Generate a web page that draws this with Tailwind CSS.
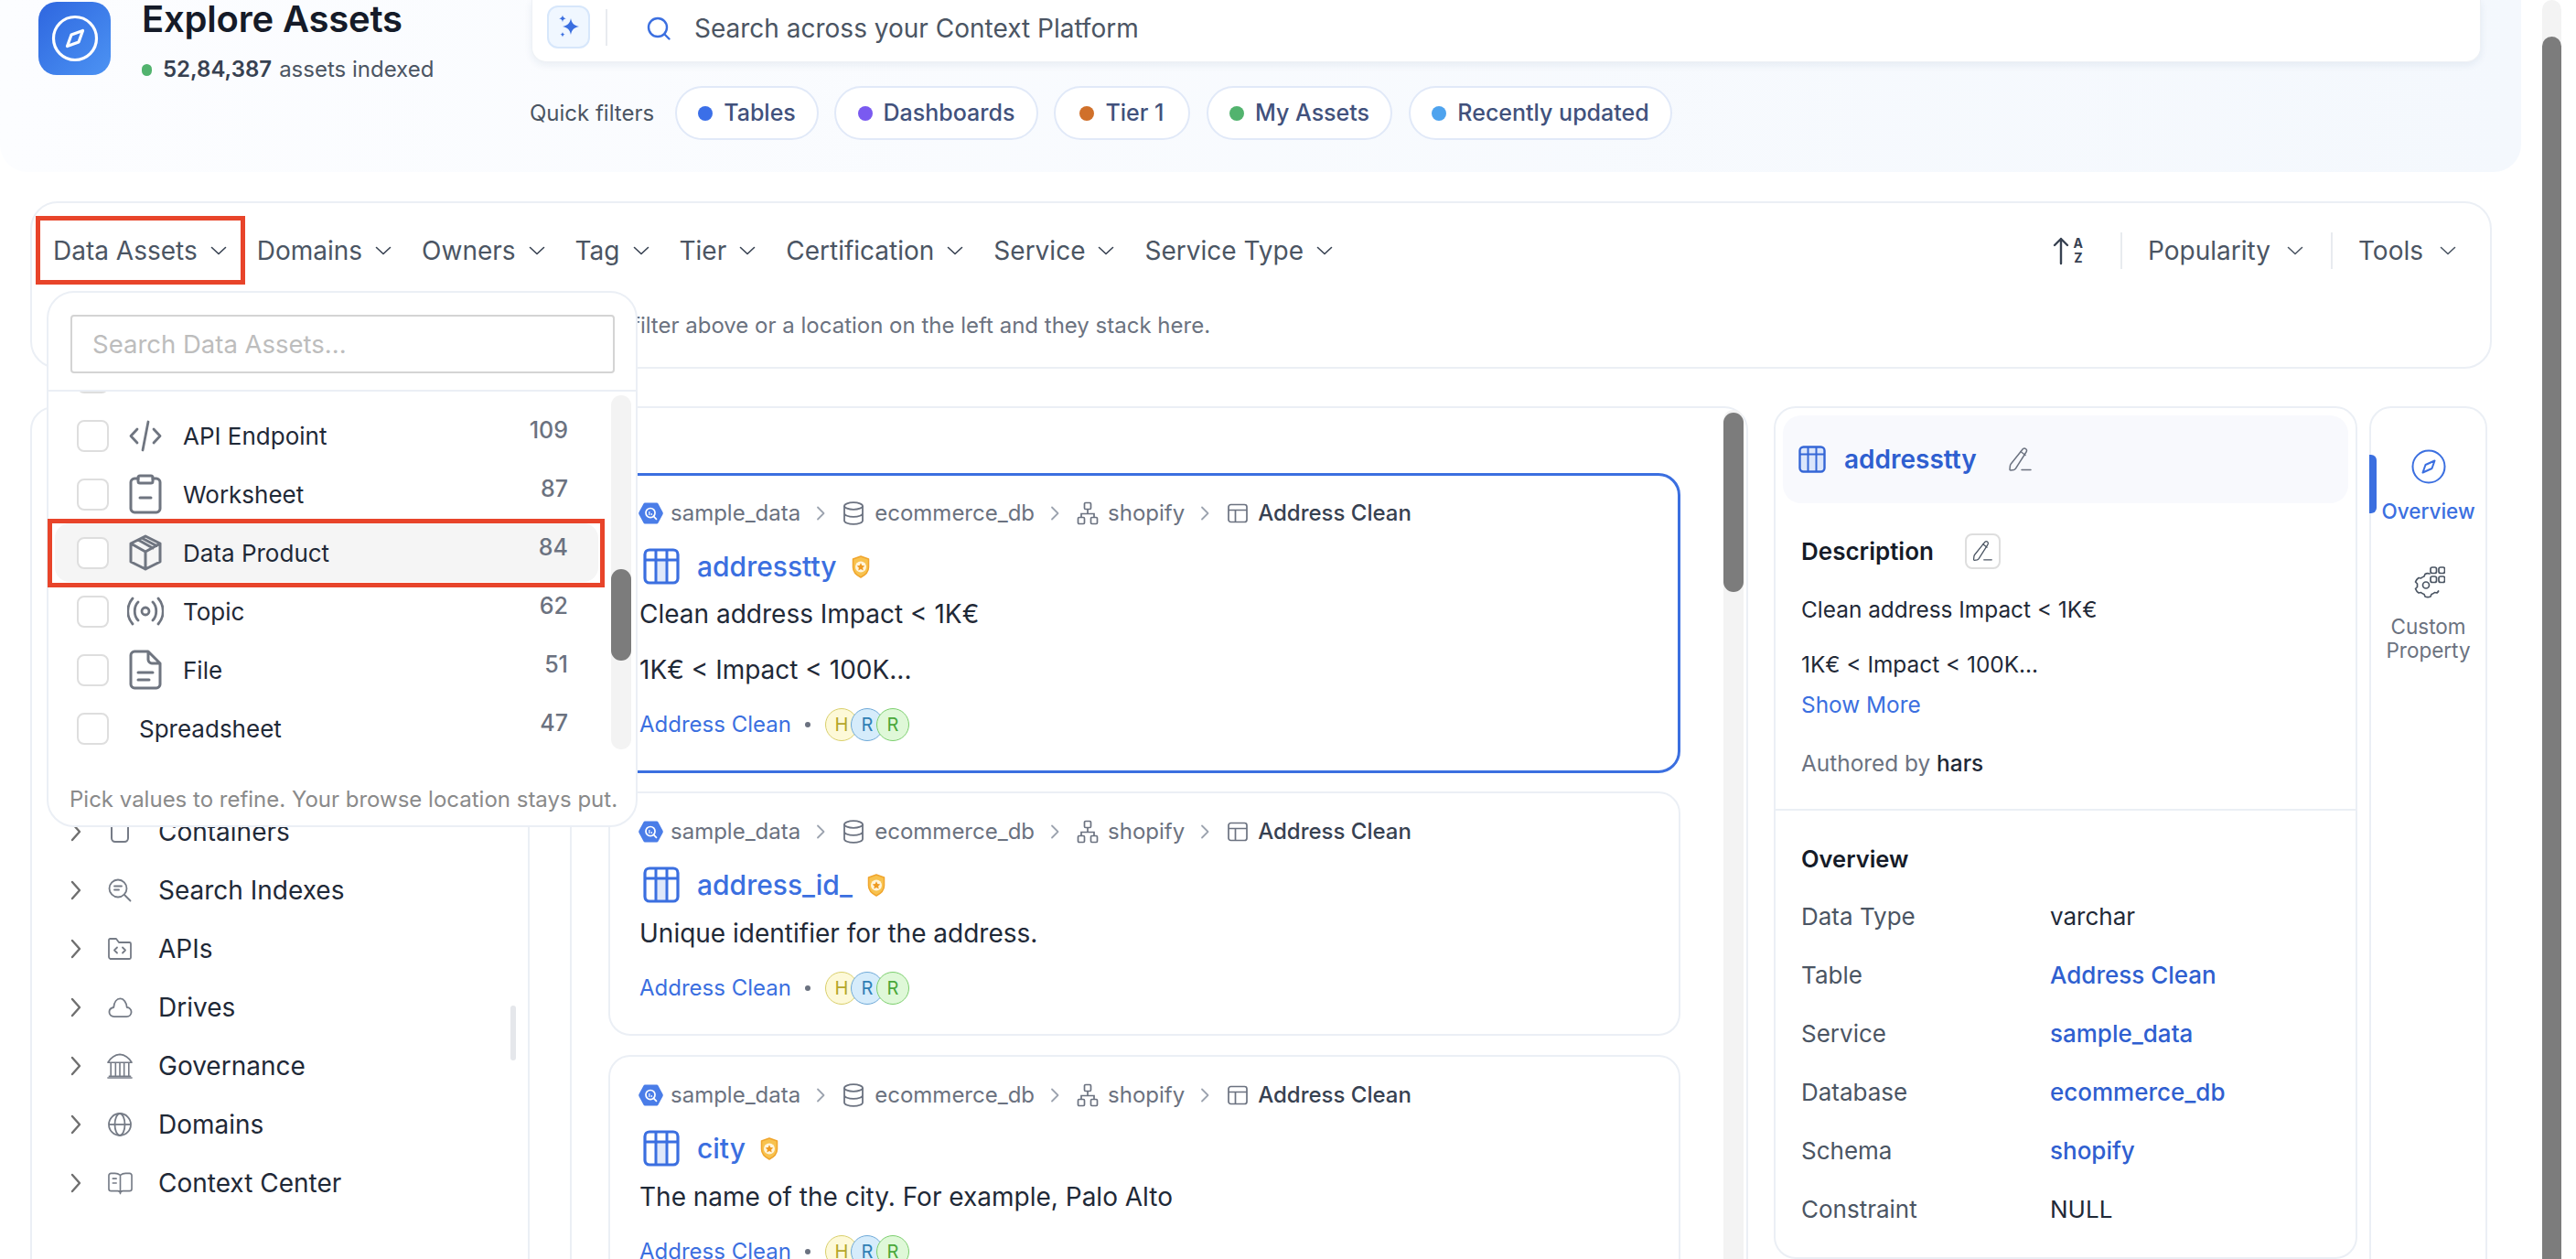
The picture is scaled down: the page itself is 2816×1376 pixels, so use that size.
<!DOCTYPE html>
<html lang="en">
<head>
<meta charset="utf-8">
<title>Explore Assets</title>
<script src="https://cdn.jsdelivr.net/npm/@tailwindcss/browser@4"></script>
</head>
<body class="bg-white overflow-hidden">
<svg class="hidden" xmlns="http://www.w3.org/2000/svg">
  <symbol id="chev" viewBox="0 0 18 10"><path d="M1.500 1.500 9 8.500l7.500-7" fill="none" stroke="currentColor" stroke-width="1.600" stroke-linecap="round" stroke-linejoin="round"/></symbol>
  <symbol id="chev-r" viewBox="0 0 12 22"><path d="M2 2l8 9-8 9" fill="none" stroke="currentColor" stroke-width="2.400" stroke-linecap="round" stroke-linejoin="round"/></symbol>
  <symbol id="crumb-chev" viewBox="0 0 10 16"><path d="M2 1.500 8.500 8 2 14.500" fill="none" stroke="currentColor" stroke-width="1.800" stroke-linecap="round" stroke-linejoin="round"/></symbol>
  <symbol id="table" viewBox="0 0 40 40"><rect x="14" y="12" width="12" height="26" fill="#dfe8fa"/><rect x="2" y="2" width="36" height="36" rx="5" fill="none" stroke="currentColor" stroke-width="3.200"/><path d="M2 13h36M14 2v36M26 2v36" fill="none" stroke="currentColor" stroke-width="3"/></symbol>
  <symbol id="table-thin" viewBox="0 0 24 24"><rect x="2" y="2.500" width="20" height="19" rx="2.500" fill="none" stroke="currentColor" stroke-width="1.700"/><path d="M2 8.500h20M9.500 8.500v13" fill="none" stroke="currentColor" stroke-width="1.700"/></symbol>
  <symbol id="db" viewBox="0 0 24 26"><ellipse cx="12" cy="5" rx="10" ry="3.800" fill="none" stroke="currentColor" stroke-width="1.800"/><path d="M2 5v16c0 2.200 4.500 3.900 10 3.900s10-1.700 10-3.900V5M2 13c0 2.200 4.500 3.900 10 3.900s10-1.700 10-3.900" fill="none" stroke="currentColor" stroke-width="1.800"/></symbol>
  <symbol id="hier" viewBox="0 0 24 26"><g fill="none" stroke="currentColor" stroke-width="1.700"><rect x="8.500" y="1.500" width="7" height="7" rx="1.200"/><rect x="1.500" y="17.500" width="7" height="7" rx="1.200"/><rect x="15.500" y="17.500" width="7" height="7" rx="1.200"/><path d="M12 8.500v5M5 17.500v-4h14v4"/></g></symbol>
  <symbol id="hex" viewBox="0 0 28 26"><path d="M7.300 1h13.400c.7 0 1.300.4 1.600 1l5.300 10c.3.600.3 1.400 0 2l-5.300 10c-.3.600-.9 1-1.600 1H7.300c-.7 0-1.300-.4-1.600-1L.4 14c-.3-.6-.3-1.400 0-2L5.700 2c.3-.6.900-1 1.600-1z" fill="#4a7de8"/><circle cx="13.500" cy="12.500" r="5.200" fill="none" stroke="#fff" stroke-width="1.800"/><path d="M17.200 16.500l3 3" stroke="#fff" stroke-width="1.800" stroke-linecap="round"/><path d="M12.300 11v4M14.800 13v2" stroke="#fff" stroke-width="1.200"/></symbol>
  <symbol id="badge" viewBox="0 0 20 25"><path d="M10 1 18.500 4v9c0 5-3.500 8.500-8.500 11C5 21.500 1.500 18 1.500 13V4z" fill="#f8c24e" stroke="#f0a52d" stroke-width="1.500" stroke-linejoin="round"/><circle cx="10" cy="12.500" r="6" fill="#fff5dc"/><path d="M10 8.300l1.300 2.800 3 .3-2.200 2 .6 3-2.700-1.500-2.700 1.500.6-3-2.200-2 3-.3z" fill="#ee9a22"/></symbol>
  <symbol id="pen" viewBox="0 0 28 28"><path d="M17.500 2.500c1-.8 2.300-.6 3.200.2 1 .9 1 2.200.3 3.300L9.500 24c-.5.700-1.200 1.200-2 1.400l-3.500.6c-.6.100-1-.3-1-.9l.4-4c.1-.8.400-1.500.9-2.100z" fill="none" stroke="currentColor" stroke-width="1.500" stroke-linejoin="round"/><path d="M15 5.500l5 4M16 25.500h10" fill="none" stroke="currentColor" stroke-width="1.500" stroke-linecap="round"/></symbol>
</svg>

<div class="relative flex w-[2816px] h-[1376px] overflow-hidden bg-white font-['Inter',sans-serif]">
  <main class="w-[2779px] shrink-0 flex flex-col">

    <section class="w-[2756px] h-[188px] shrink-0 flex pl-[42px] rounded-b-[30px] bg-gradient-to-r from-[#fcfdff] to-[#f4f8fd]">
      <div class="mt-[2px] w-[79px] h-[80px] shrink-0 flex items-center justify-center rounded-[20px] bg-gradient-to-br from-[#2f66df] to-[#4d93f3]">
        <svg viewBox="0 0 52 52" class="w-[52px] h-[52px]" fill="none" stroke="#fff" stroke-width="3.200"><circle cx="26" cy="26" r="23.500"/><path d="M34.500 17.500 30 30l-12.500 4.500L22 22z" stroke-linejoin="round"/></svg>
      </div>
      <div class="ml-[34px] w-[426px] shrink-0 flex flex-col">
        <h1 class="mt-[1px] h-[40px] text-[40px] leading-[40px] font-semibold text-[#151b28] tracking-[-0.2px]">Explore Assets</h1>
        <div class="mt-[19px] flex items-center text-[24px] leading-[32px] text-[#4b5563]">
          <span class="w-[11px] h-[13px] rounded-full bg-[#52b36e]"></span>
          <span class="ml-[12px] font-semibold text-[#374151]">52,84,387</span>
          <span class="ml-[8px]">assets indexed</span>
        </div>
      </div>
      <div class="w-[2131px] shrink-0 flex flex-col">
        <div class="h-[68px] flex items-center pl-[16px] bg-white rounded-b-[16px] border-r border-b border-l border-[#eef1f5] shadow-[0_3px_8px_rgba(30,60,110,0.08)]">
          <div class="w-[47px] h-[47px] -mt-[9px] flex items-center justify-center rounded-[12px] bg-[#f0f7ff] border-2 border-[#d7e7fb]">
            <svg viewBox="0 0 28 28" class="w-[28px] h-[28px]" fill="#3b6fe0"><path d="M16 5c.9 5.300 3.200 7.700 9 9-5.800 1.300-8.100 3.700-9 9-.9-5.300-3.200-7.700-9-9 5.800-1.300 8.100-3.700 9-9z"/><path d="M7 1.500c.4 2.400 1.300 3.300 3.800 3.800C8.300 5.800 7.400 6.700 7 9.200 6.600 6.700 5.700 5.800 3.200 5.300 5.700 4.800 6.600 3.900 7 1.500zM7 20c.3 1.700 1 2.400 2.700 2.700C8 23 7.300 23.700 7 25.500c-.3-1.800-1-2.500-2.700-2.800C6 22.400 6.700 21.700 7 20z"/></svg>
          </div>
          <span class="ml-[17px] -mt-[8px] w-[2px] h-[40px] bg-[#e8ebef]"></span>
          <svg viewBox="0 0 26 26" class="ml-[43px] -mt-[5px] w-[26px] h-[26px]" fill="none" stroke="#3b6fe0" stroke-width="2.400" stroke-linecap="round"><circle cx="12" cy="12" r="10"/><path d="M19.500 19.500 24.500 24.500"/></svg>
          <span class="ml-[26px] -mt-[5px] text-[28px] leading-[36px] text-[#4b5563]">Search across your Context Platform</span>
        </div>
        <div class="mt-[26px] flex items-center">
          <span class="-ml-[2px] w-[159px] text-[24px] text-[#4b5563]">Quick filters</span>
          <div class="w-[157px] h-[59px] flex items-center justify-center gap-[12px] bg-white rounded-full border-2 border-[#e1e9f8] text-[25px] font-medium text-[#41517c]"><span class="w-[16px] h-[16px] rounded-full bg-[#3b6fe8]"></span>Tables</div>
          <div class="ml-[17px] w-[223px] h-[59px] flex items-center justify-center gap-[12px] bg-white rounded-full border-2 border-[#e1e9f8] text-[25px] font-medium text-[#41517c]"><span class="w-[16px] h-[16px] rounded-full bg-[#7a5af0]"></span>Dashboards</div>
          <div class="ml-[17px] w-[149px] h-[59px] flex items-center justify-center gap-[12px] bg-white rounded-full border-2 border-[#e1e9f8] text-[25px] font-medium text-[#41517c]"><span class="w-[16px] h-[16px] rounded-full bg-[#d0702a]"></span>Tier 1</div>
          <div class="ml-[18px] w-[203px] h-[59px] flex items-center justify-center gap-[12px] bg-white rounded-full border-2 border-[#e1e9f8] text-[25px] font-medium text-[#41517c]"><span class="w-[16px] h-[16px] rounded-full bg-[#52b36e]"></span>My Assets</div>
          <div class="ml-[18px] w-[288px] h-[59px] flex items-center justify-center gap-[12px] bg-white rounded-full border-2 border-[#e1e9f8] text-[25px] font-medium text-[#41517c]"><span class="w-[16px] h-[16px] rounded-full bg-[#4ea3ee]"></span>Recently updated</div>
        </div>
      </div>
    </section>

    <section class="ml-[33px] mt-[32px] w-[2691px] h-[183px] shrink-0 flex flex-col rounded-[30px] border-2 border-[#ebeff5] bg-white">
      <div class="mt-[26px] h-[52px] flex items-center pl-[23px] pr-[37px] text-[28px] text-[#4b5563]">
        <div class="flex items-center gap-[33px]">
          <span class="flex items-center gap-[14px]">Data Assets<svg class="w-[18px] h-[10px] text-[#374151]"><use href="#chev"/></svg></span>
          <span class="flex items-center gap-[14px]">Domains<svg class="w-[18px] h-[10px] text-[#374151]"><use href="#chev"/></svg></span>
          <span class="flex items-center gap-[14px]">Owners<svg class="w-[18px] h-[10px] text-[#374151]"><use href="#chev"/></svg></span>
          <span class="flex items-center gap-[14px]">Tag<svg class="w-[18px] h-[10px] text-[#374151]"><use href="#chev"/></svg></span>
          <span class="flex items-center gap-[14px]">Tier<svg class="w-[18px] h-[10px] text-[#374151]"><use href="#chev"/></svg></span>
          <span class="flex items-center gap-[14px]">Certification<svg class="w-[18px] h-[10px] text-[#374151]"><use href="#chev"/></svg></span>
          <span class="flex items-center gap-[14px]">Service<svg class="w-[18px] h-[10px] text-[#374151]"><use href="#chev"/></svg></span>
          <span class="flex items-center gap-[14px]">Service Type<svg class="w-[18px] h-[10px] text-[#374151]"><use href="#chev"/></svg></span>
        </div>
        <div class="ml-auto flex items-center">
          <span class="flex items-center gap-[5px] text-[#374151]">
            <svg viewBox="0 0 18 32" class="w-[18px] h-[32px]" fill="none" stroke="currentColor" stroke-width="2.400" stroke-linecap="round" stroke-linejoin="round"><path d="M9 30V3M2 10l7-7 7 7"/></svg>
            <span class="flex flex-col items-center text-[14px] leading-[16px] font-bold"><span>A</span><span>Z</span></span>
          </span>
          <span class="ml-[41px] w-[2px] h-[40px] bg-[#e8ebef]"></span>
          <span class="ml-[28px] flex items-center gap-[18px]">Popularity<svg class="w-[18px] h-[10px] text-[#4b5563]"><use href="#chev"/></svg></span>
          <span class="ml-[30px] w-[2px] h-[40px] bg-[#e8ebef]"></span>
          <span class="ml-[28px] flex items-center gap-[18px]">Tools<svg class="w-[18px] h-[10px] text-[#4b5563]"><use href="#chev"/></svg></span>
        </div>
      </div>
      <p class="mt-[40px] pl-[656px] text-[24px] leading-[32px] text-[#6b7280]">filter above or a location on the left and they stack here.</p>
    </section>

    <div class="ml-[33px] mt-[41px] flex items-start">
      <aside class="relative w-[546px] h-[960px] shrink-0 pt-[431px] pl-[42px] rounded-t-[26px] border-2 border-[#ebeff5] bg-white text-[28px] text-[#1f2937]">
        <div class="h-[64px] flex items-center"><svg class="w-[12px] h-[22px] text-[#6f6f6f]"><use href="#chev-r"/></svg><span class="w-[84px] flex justify-center"><svg viewBox="0 0 26 26" class="w-[26px] h-[26px]" fill="none" stroke="#757b86" stroke-width="2"><path d="M4 2v18c0 2 1.500 4 4 4h10c2.500 0 4-2 4-4V2"/></svg></span>Containers</div>
        <div class="h-[64px] flex items-center"><svg class="w-[12px] h-[22px] text-[#6f6f6f]"><use href="#chev-r"/></svg><span class="w-[84px] flex justify-center"><svg viewBox="0 0 26 26" class="w-[26px] h-[26px]" fill="none" stroke="#757b86" stroke-width="1.800" stroke-linecap="round"><circle cx="11" cy="11" r="9.500"/><path d="M18 18l6.500 6.500M7 8.500h8M7 12.500h5"/></svg></span>Search Indexes</div>
        <div class="h-[64px] flex items-center"><svg class="w-[12px] h-[22px] text-[#6f6f6f]"><use href="#chev-r"/></svg><span class="w-[84px] flex justify-center"><svg viewBox="0 0 26 26" class="w-[26px] h-[26px]" fill="none" stroke="#757b86" stroke-width="1.800" stroke-linecap="round" stroke-linejoin="round"><path d="M1 3.500c0-.8.600-1.500 1.500-1.500H9l3 4h11.500c.8 0 1.500.700 1.500 1.500v15c0 .8-.7 1.500-1.500 1.500h-21C1.600 23.500 1 22.800 1 22z"/><path d="M10 11.500l-3 3 3 3M16 11.500l3 3-3 3"/></svg></span>APIs</div>
        <div class="h-[64px] flex items-center"><svg class="w-[12px] h-[22px] text-[#6f6f6f]"><use href="#chev-r"/></svg><span class="w-[84px] flex justify-center"><svg viewBox="0 0 28 24" class="w-[27px] h-[24px]" fill="none" stroke="#757b86" stroke-width="1.900" stroke-linejoin="round"><path d="M7 22.500h14c3.300 0 5.500-2.300 5.500-5.300 0-2.900-2.200-5-5-5.200C21 6.500 18 2 14 2S7 6 6.500 12C3.500 12.500 1.500 14.500 1.500 17.300c0 3 2.200 5.200 5.500 5.200z"/></svg></span>Drives</div>
        <div class="h-[64px] flex items-center"><svg class="w-[12px] h-[22px] text-[#6f6f6f]"><use href="#chev-r"/></svg><span class="w-[84px] flex justify-center"><svg viewBox="0 0 32 30" class="w-[32px] h-[28px]" fill="none" stroke="#757b86" stroke-width="1.700" stroke-linecap="round" stroke-linejoin="round"><path d="M2 11c3-5 8-9 14-9.500C22 2 27 6 30 11zM2 11h28M5.500 11v15M11 11v15M16 11v15M21 11v15M26.500 11v15M3.500 27h25M2 29h28"/></svg></span>Governance</div>
        <div class="h-[64px] flex items-center"><svg class="w-[12px] h-[22px] text-[#6f6f6f]"><use href="#chev-r"/></svg><span class="w-[84px] flex justify-center"><svg viewBox="0 0 26 26" class="w-[26px] h-[26px]" fill="none" stroke="#757b86" stroke-width="1.800"><circle cx="13" cy="13" r="12"/><ellipse cx="13" cy="13" rx="5.500" ry="12"/><path d="M1 13h24"/></svg></span>Domains</div>
        <div class="h-[64px] flex items-center"><svg class="w-[12px] h-[22px] text-[#6f6f6f]"><use href="#chev-r"/></svg><span class="w-[84px] flex justify-center"><svg viewBox="0 0 28 26" class="w-[27px] h-[26px]" fill="none" stroke="#757b86" stroke-width="1.700" stroke-linecap="round" stroke-linejoin="round"><path d="M14 4c-2-1.500-4-2-6-2H3.500C2.100 2 1 3 1 4.500v15C1 21 2.100 22 3.500 22H11c1.600 0 3 1 3 2.500 0-1.500 1.400-2.500 3-2.500h7.500c1.400 0 2.500-1 2.500-2.500v-15C27 3 25.900 2 24.500 2H20c-2 0-4 .5-6 2zM14 4v21M5.500 8h4M5.500 13h4"/></svg></span>Context Center</div>
        <div class="absolute left-[523px] top-[653px] w-[6px] h-[60px] rounded-full bg-[#e5e7eb]"></div>
      </aside>

      <section class="ml-[44px] w-[1288px] h-[960px] shrink-0 flex rounded-t-[26px] border-2 border-[#ebeff5] bg-white">
        <div class="w-[1172px] ml-[40px] mt-[71px] shrink-0 flex flex-col gap-[20px]">

          <article class="h-[328px] shrink-0 pl-[31px] pt-[24px] rounded-[24px] border-[3px] border-[#3b6fe0]">
            <div class="h-[34px] flex items-center text-[24px] text-[#6b7280]">
              <svg class="-ml-[1px] w-[27px] h-[26px]"><use href="#hex"/></svg><span class="ml-[8px]">sample_data</span>
              <svg class="ml-[17px] w-[10px] h-[16px] text-[#9ca3af]"><use href="#crumb-chev"/></svg>
              <svg class="ml-[19px] w-[24px] h-[26px]"><use href="#db"/></svg><span class="ml-[11px]">ecommerce_db</span>
              <svg class="ml-[17px] w-[10px] h-[16px] text-[#9ca3af]"><use href="#crumb-chev"/></svg>
              <svg class="ml-[19px] w-[24px] h-[26px]"><use href="#hier"/></svg><span class="ml-[10px]">shopify</span>
              <svg class="ml-[17px] w-[10px] h-[16px] text-[#9ca3af]"><use href="#crumb-chev"/></svg>
              <svg class="ml-[19px] w-[24px] h-[24px]"><use href="#table-thin"/></svg><span class="ml-[10px] font-medium text-[#374151]">Address Clean</span>
            </div>
            <div class="mt-[19px] h-[44px] flex items-center text-[30px] font-medium text-[#3b6fe0]"><svg class="ml-[4px] w-[40px] h-[40px]"><use href="#table"/></svg><span class="ml-[19px]">addresstty</span><svg class="ml-[16px] w-[20px] h-[25px]"><use href="#badge"/></svg></div>
            <p class="mt-[11px] text-[28px] leading-[38px] text-[#1f2937]">Clean address Impact &lt; 1K€</p>
            <p class="mt-[23px] text-[28px] leading-[38px] text-[#1f2937]">1K€ &lt; Impact &lt; 100K...</p>
            <div class="mt-[23px] h-[36px] flex items-center text-[24px] text-[#3b6fe0]">Address Clean<span class="ml-[15px] w-[6px] h-[6px] rounded-full bg-[#6b7280]"></span><div class="ml-[16px] flex text-[20px]"><span class="w-[36px] h-[36px] rounded-full flex items-center justify-center border border-[#d9cf6a] bg-[#fdf9d8] text-[#b5a62a]">H</span><span class="-ml-[8px] w-[36px] h-[36px] rounded-full flex items-center justify-center border border-[#6ea9d8] bg-[#d6ecfb] text-[#2f7fb5]">R</span><span class="-ml-[8px] w-[36px] h-[36px] rounded-full flex items-center justify-center border border-[#7ccf6e] bg-[#dff8d8] text-[#4aa83a]">R</span></div></div>
          </article>

          <article class="h-[267px] shrink-0 pl-[32px] pt-[25px] rounded-[24px] border-2 border-[#ebeff5]">
            <div class="h-[34px] flex items-center text-[24px] text-[#6b7280]">
              <svg class="-ml-[1px] w-[27px] h-[26px]"><use href="#hex"/></svg><span class="ml-[8px]">sample_data</span>
              <svg class="ml-[17px] w-[10px] h-[16px] text-[#9ca3af]"><use href="#crumb-chev"/></svg>
              <svg class="ml-[19px] w-[24px] h-[26px]"><use href="#db"/></svg><span class="ml-[11px]">ecommerce_db</span>
              <svg class="ml-[17px] w-[10px] h-[16px] text-[#9ca3af]"><use href="#crumb-chev"/></svg>
              <svg class="ml-[19px] w-[24px] h-[26px]"><use href="#hier"/></svg><span class="ml-[10px]">shopify</span>
              <svg class="ml-[17px] w-[10px] h-[16px] text-[#9ca3af]"><use href="#crumb-chev"/></svg>
              <svg class="ml-[19px] w-[24px] h-[24px]"><use href="#table-thin"/></svg><span class="ml-[10px] font-medium text-[#374151]">Address Clean</span>
            </div>
            <div class="mt-[19px] h-[44px] flex items-center text-[30px] font-medium text-[#3b6fe0]"><svg class="ml-[4px] w-[40px] h-[40px]"><use href="#table"/></svg><span class="ml-[19px]">address_id_</span><svg class="ml-[16px] w-[20px] h-[25px]"><use href="#badge"/></svg></div>
            <p class="mt-[12px] text-[28px] leading-[38px] text-[#1f2937]">Unique identifier for the address.</p>
            <div class="mt-[23px] h-[36px] flex items-center text-[24px] text-[#3b6fe0]">Address Clean<span class="ml-[15px] w-[6px] h-[6px] rounded-full bg-[#6b7280]"></span><div class="ml-[16px] flex text-[20px]"><span class="w-[36px] h-[36px] rounded-full flex items-center justify-center border border-[#d9cf6a] bg-[#fdf9d8] text-[#b5a62a]">H</span><span class="-ml-[8px] w-[36px] h-[36px] rounded-full flex items-center justify-center border border-[#6ea9d8] bg-[#d6ecfb] text-[#2f7fb5]">R</span><span class="-ml-[8px] w-[36px] h-[36px] rounded-full flex items-center justify-center border border-[#7ccf6e] bg-[#dff8d8] text-[#4aa83a]">R</span></div></div>
          </article>

          <article class="mt-[1px] h-[267px] shrink-0 pl-[32px] pt-[25px] rounded-[24px] border-2 border-[#ebeff5]">
            <div class="h-[34px] flex items-center text-[24px] text-[#6b7280]">
              <svg class="-ml-[1px] w-[27px] h-[26px]"><use href="#hex"/></svg><span class="ml-[8px]">sample_data</span>
              <svg class="ml-[17px] w-[10px] h-[16px] text-[#9ca3af]"><use href="#crumb-chev"/></svg>
              <svg class="ml-[19px] w-[24px] h-[26px]"><use href="#db"/></svg><span class="ml-[11px]">ecommerce_db</span>
              <svg class="ml-[17px] w-[10px] h-[16px] text-[#9ca3af]"><use href="#crumb-chev"/></svg>
              <svg class="ml-[19px] w-[24px] h-[26px]"><use href="#hier"/></svg><span class="ml-[10px]">shopify</span>
              <svg class="ml-[17px] w-[10px] h-[16px] text-[#9ca3af]"><use href="#crumb-chev"/></svg>
              <svg class="ml-[19px] w-[24px] h-[24px]"><use href="#table-thin"/></svg><span class="ml-[10px] font-medium text-[#374151]">Address Clean</span>
            </div>
            <div class="mt-[19px] h-[44px] flex items-center text-[30px] font-medium text-[#3b6fe0]"><svg class="ml-[4px] w-[40px] h-[40px]"><use href="#table"/></svg><span class="ml-[19px]">city</span><svg class="ml-[16px] w-[20px] h-[25px]"><use href="#badge"/></svg></div>
            <p class="mt-[12px] text-[28px] leading-[38px] text-[#1f2937]">The name of the city. For example, Palo Alto</p>
            <div class="mt-[23px] h-[36px] flex items-center text-[24px] text-[#3b6fe0]">Address Clean<span class="ml-[15px] w-[6px] h-[6px] rounded-full bg-[#6b7280]"></span><div class="ml-[16px] flex text-[20px]"><span class="w-[36px] h-[36px] rounded-full flex items-center justify-center border border-[#d9cf6a] bg-[#fdf9d8] text-[#b5a62a]">H</span><span class="-ml-[8px] w-[36px] h-[36px] rounded-full flex items-center justify-center border border-[#6ea9d8] bg-[#d6ecfb] text-[#2f7fb5]">R</span><span class="-ml-[8px] w-[36px] h-[36px] rounded-full flex items-center justify-center border border-[#7ccf6e] bg-[#dff8d8] text-[#4aa83a]">R</span></div></div>
          </article>
        </div>
        <div class="ml-[47px] mt-[2px] w-[22px] h-[950px] shrink-0 rounded-full bg-[#f3f3f3]"><div class="mt-[3px] h-[196px] rounded-full bg-[#7c7c7c]"></div></div>
      </section>

      <section class="ml-[28px] w-[638px] h-[932px] shrink-0 flex flex-col rounded-[24px] border-2 border-[#ebeff5] bg-white">
        <div class="mx-[8px] mt-[8px] h-[96px] shrink-0 flex items-center pl-[17px] rounded-[20px] bg-[#f8f9fd]">
          <svg viewBox="0 0 30 30" class="w-[30px] h-[30px]"><rect x="1.500" y="1.500" width="27" height="27" rx="4" fill="#dbe6fb" stroke="#3566d6" stroke-width="2.400"/><path d="M1.500 9.500h27M10.500 1.500v27M19.500 1.500v27" stroke="#3566d6" stroke-width="2" fill="none"/></svg>
          <span class="ml-[20px] text-[28px] font-semibold text-[#2f5fd0]">addresstty</span>
          <svg class="ml-[33px] w-[28px] h-[28px] text-[#6b7280]"><use href="#pen"/></svg>
        </div>
        <div class="h-[336px] shrink-0 pl-[28px] pt-[32px] border-b-2 border-[#ebeff5] text-[24.4px] text-[#1f2937]">
          <div class="h-[40px] flex items-center"><span class="text-[26px] font-semibold text-[#151b28]">Description</span><span class="ml-[34px] w-[39px] h-[39px] flex items-center justify-center rounded-[8px] border-2 border-[#dedede]"><svg class="w-[24px] h-[24px] text-[#4b5563]"><use href="#pen"/></svg></span></div>
          <p class="mt-[28px] leading-[32px]">Clean address Impact &lt; 1K€</p>
          <p class="mt-[28px] leading-[32px]">1K€ &lt; Impact &lt; 100K...</p>
          <p class="mt-[12px] leading-[32px] text-[#3b6fe0]">Show More</p>
          <p class="mt-[32px] leading-[32px] text-[#6b7280]">Authored by <span class="font-medium text-[#1f2937]">hars</span></p>
        </div>
        <div class="pl-[28px] pt-[33px] text-[26px]">
          <h3 class="h-[40px] text-[25.5px] leading-[40px] font-semibold text-[#151b28]">Overview</h3>
          <dl class="mt-[10px] grid grid-cols-[272px_1fr] auto-rows-[64px] items-center text-[#4b5563]">
            <dt>Data Type</dt><dd class="text-[#1f2937]">varchar</dd>
            <dt>Table</dt><dd class="font-medium text-[#2f5fd0]">Address Clean</dd>
            <dt>Service</dt><dd class="font-medium text-[#2f5fd0]">sample_data</dd>
            <dt>Database</dt><dd class="font-medium text-[#2f5fd0]">ecommerce_db</dd>
            <dt>Schema</dt><dd class="font-medium text-[#2f5fd0]">shopify</dd>
            <dt>Constraint</dt><dd class="text-[#1f2937]">NULL</dd>
          </dl>
        </div>
      </section>

      <nav class="relative ml-[13px] w-[129px] h-[960px] shrink-0 flex flex-col items-center rounded-t-[24px] border-2 border-[#ebeff5] bg-white pt-[45px] text-[22.5px] text-center">
        <span class="absolute -left-[2px] top-[51px] w-[8px] h-[64px] rounded-r-[6px] bg-[#3b6fe0]"></span>
        <svg viewBox="0 0 38 38" class="w-[38px] h-[38px]" fill="none" stroke="#3b6fe0" stroke-width="2"><circle cx="19" cy="19" r="17.500"/><path d="M25.500 12.500 22.500 21l-10 4.500L15.500 17z" stroke-linejoin="round"/></svg>
        <span class="mt-[16px] leading-[28px] font-medium text-[#3b6fe0]">Overview</span>
        <svg viewBox="0 0 36 36" class="mt-[45px] w-[36px] h-[36px]" fill="none" stroke="#4b5563" stroke-width="1.700" stroke-linecap="round" stroke-linejoin="round"><path d="M19 9c-2-.5-3.500-.5-5 .5l-1 2.500c-1.500.5-2.500 1-3.500 2L7 13.500c-1.500 1-2.800 2.800-3.500 4.500L5.500 20v3.500l-2 2c.7 1.800 2 3.500 3.500 4.500l2.500-.5c1 1 2 1.500 3.500 2l1 2.500c2 .8 4 .8 6 0l1-2.500c1.500-.5 2.500-1 3.500-2l2.500.5c.6-.5 1.200-1.200 1.600-2"/><circle cx="15" cy="21.500" r="3.500"/><rect x="20" y="2" width="6.500" height="6.500" rx="2"/><rect x="29" y="2" width="6.500" height="6.500" rx="2"/><rect x="20" y="12" width="6.500" height="6.500" rx="2"/><rect x="29" y="12" width="6.500" height="6.500" rx="2"/></svg>
        <span class="mt-[18px] leading-[26px] text-[#6b7280]">Custom<br>Property</span>
      </nav>
    </div>
  </main>

  <div class="w-[21px] h-[1376px] shrink-0 rounded-t-full bg-[#f3f3f3]"><div class="mt-[40px] h-[1336px] rounded-t-full bg-[#7c7c7c]"></div></div>

  <!-- Filter popover -->
  <div class="absolute left-[51px] top-[318px] w-[646px] h-[586px] flex flex-col rounded-[30px] border-2 border-[#ebeff5] bg-white">
    <div class="ml-[24px] mr-[23px] mt-[24px] h-[64px] shrink-0 flex items-center pl-[22px] pt-[2px] rounded-[4px] border-2 border-[#d4d4d4] text-[27.5px] text-[#bdbdbd]">Search Data Assets...</div>
    <div class="mt-[18px] h-[402px] shrink-0 flex overflow-hidden border-t-2 border-[#ebeff5]">
      <div class="w-[601px] shrink-0 -mt-[48px] pl-[7px] text-[26px] text-[#1f2937]">
        <div class="h-[64px] flex items-center pl-[24px] pr-[33px]"><span class="w-[35px] h-[35px] shrink-0 rounded-[8px] border-2 border-[#dedede]"></span><svg viewBox="0 0 36 36" class="ml-[22px] w-[36px] h-[36px]" fill="none" stroke="#6f7580" stroke-width="3"><circle cx="18" cy="24" r="5"/></svg><span class="ml-[23px]">Pipeline</span><span class="ml-auto -mt-[10px] text-[25px] font-medium text-[#6b7280]">124</span></div>
        <div class="h-[64px] flex items-center pl-[24px] pr-[33px]"><span class="w-[35px] h-[35px] shrink-0 rounded-[8px] border-2 border-[#dedede]"></span><svg viewBox="0 0 36 36" class="ml-[22px] w-[36px] h-[36px]" fill="none" stroke="#6f7580" stroke-width="2.800" stroke-linecap="round" stroke-linejoin="round"><path d="M9 11l-7 7.500L9 26M27 11l7 7.500L27 26M21 3l-6 31"/></svg><span class="ml-[23px]">API Endpoint</span><span class="ml-auto -mt-[10px] text-[25px] font-medium text-[#6b7280]">109</span></div>
        <div class="h-[64px] flex items-center pl-[24px] pr-[33px]"><span class="w-[35px] h-[35px] shrink-0 rounded-[8px] border-2 border-[#dedede]"></span><svg viewBox="0 0 36 44" class="ml-[22px] w-[36px] h-[44px]" fill="none" stroke="#6f7580" stroke-width="3" stroke-linecap="round" stroke-linejoin="round"><path d="M10 5H6c-2 0-4 2-4 4v29c0 2 2 4 4 4h24c2 0 4-2 4-4V9c0-2-2-4-4-4h-4"/><rect x="10" y="2" width="16" height="8" rx="2"/><path d="M12 26h12"/></svg><span class="ml-[23px]">Worksheet</span><span class="ml-auto -mt-[10px] text-[25px] font-medium text-[#6b7280]">87</span></div>
        <div class="h-[64px] flex items-center pl-[24px] pr-[33px] rounded-[16px] bg-[#f5f5f5]"><span class="w-[35px] h-[35px] shrink-0 rounded-[8px] border-2 border-[#dedede] bg-white"></span><svg viewBox="0 0 36 40" class="ml-[22px] w-[36px] h-[40px]" fill="none" stroke="#6f7580" stroke-width="3" stroke-linecap="round" stroke-linejoin="round"><path d="M18 2 34 10v20L18 38 2 30V10zM2 10l16 9 16-9M18 19v19M10 6l16 9M14 4l16 8.500"/></svg><span class="ml-[23px]">Data Product</span><span class="ml-auto -mt-[10px] text-[25px] font-medium text-[#6b7280]">84</span></div>
        <div class="h-[64px] flex items-center pl-[24px] pr-[33px]"><span class="w-[35px] h-[35px] shrink-0 rounded-[8px] border-2 border-[#dedede]"></span><svg viewBox="0 0 40 32" class="ml-[20px] mr-[-2px] w-[40px] h-[32px]" fill="none" stroke="#6f7580" stroke-width="2.800" stroke-linecap="round"><circle cx="20" cy="16" r="4"/><path d="M12 6c-5 5-5 15 0 20M28 6c5 5 5 15 0 20M6 2c-7 8-7 20 0 28M34 2c7 8 7 20 0 28"/></svg><span class="ml-[23px]">Topic</span><span class="ml-auto -mt-[10px] text-[25px] font-medium text-[#6b7280]">62</span></div>
        <div class="h-[64px] flex items-center pl-[24px] pr-[33px]"><span class="w-[35px] h-[35px] shrink-0 rounded-[8px] border-2 border-[#dedede]"></span><svg viewBox="0 0 36 44" class="ml-[22px] w-[36px] h-[44px]" fill="none" stroke="#6f7580" stroke-width="3" stroke-linecap="round" stroke-linejoin="round"><path d="M6 2h15l13 13v23c0 2-2 4-4 4H6c-2 0-4-2-4-4V6c0-2 2-4 4-4zM21 2v9c0 2 2 4 4 4h9M10 25h16M10 33h12"/></svg><span class="ml-[23px]">File</span><span class="ml-auto -mt-[10px] text-[25px] font-medium text-[#6b7280]">51</span></div>
        <div class="h-[64px] flex items-center pl-[24px] pr-[33px]"><span class="w-[35px] h-[35px] shrink-0 rounded-[8px] border-2 border-[#dedede]"></span><span class="ml-[33px]">Spreadsheet</span><span class="ml-auto -mt-[10px] text-[25px] font-medium text-[#6b7280]">47</span></div>
      </div>
      <div class="mt-[4px] ml-[14px] w-[22px] h-[387px] shrink-0 rounded-full bg-[#f3f3f3]"><div class="mt-[190px] h-[100px] rounded-full bg-[#7c7c7c]"></div></div>
    </div>
    <p class="ml-[23px] mt-[30px] text-[24px] leading-[32px] whitespace-nowrap text-[#8a8a8a]">Pick values to refine. Your browse location stays put.</p>
  </div>

  <!-- Annotation rectangles -->
  <div class="absolute left-[39px] top-[236px] w-[229px] h-[75px] border-[5px] border-[#e8442a]"></div>
  <div class="absolute left-[52px] top-[567px] w-[609px] h-[75px] border-[5px] border-[#e8442a]"></div>
</div>
</body>
</html>
